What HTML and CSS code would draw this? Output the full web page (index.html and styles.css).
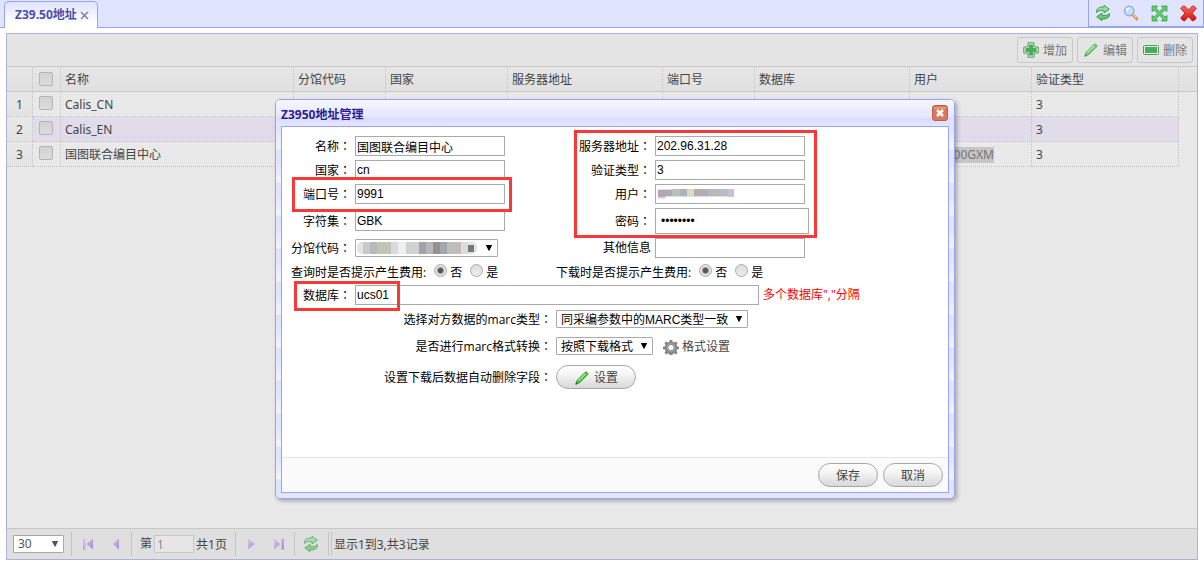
FILE: index.html
```html
<!DOCTYPE html>
<html lang="zh-CN">
<head>
<meta charset="utf-8">
<title>Z39.50地址</title>
<link rel="stylesheet" href="styles.css">
</head>
<body>
<svg class="defs" aria-hidden="true">
  <defs>
    <linearGradient id="green" x1="0" y1="0" x2="0" y2="1"><stop offset="0" stop-color="#a5eb9f"/><stop offset="1" stop-color="#4cc257"/></linearGradient>
    <linearGradient id="red" x1="0" y1="0" x2="0" y2="1"><stop offset="0" stop-color="#ff6a5a"/><stop offset="1" stop-color="#d80f0f"/></linearGradient>
    <linearGradient id="violet" x1="0" y1="0" x2="1" y2="1"><stop offset="0" stop-color="#d5caec"/><stop offset="1" stop-color="#a28ad4"/></linearGradient>
    <symbol id="refresh" viewBox="0 0 16 16"><path d="M1.500 7.500C1 3.500 4 1.800 9 2V.3l5.300 3.900L9 8V5.700C6 5.300 3.500 5.500 1.500 7.500zM14.500 8.500c.5 4-2.500 5.700-7.500 5.500v1.700l-5.300-3.900L7 8v2.300c3 .4 5.500.2 7.500-1.800z" fill="url(#green)" stroke="#3c8f49" stroke-width=".9" stroke-linejoin="round"/></symbol>
    <symbol id="pencil" viewBox="0 0 16 16"><path d="M1.800 14.200l1.200-3.700L11.300 2.200c.9-.8 3.200.9 2.500 2.300L5.300 13z" fill="#3cc43c" stroke="#2b8c33" stroke-width=".8"/><path d="M4.300 10.900l7.300-7.200" stroke="#a8f08a" stroke-width="1.300"/><path d="M1.500 14.500l.6-2 1.400 1.400z" fill="#1b5e22"/></symbol>
    <symbol id="caret" viewBox="0 0 8 8"><path d="M.8 1h6.400L4.300 6.800h-.6z" fill="currentColor"/></symbol>
  </defs>
</svg>

<header class="tabbar">
  <div class="tab"><span>Z39.50地址</span>
    <button class="tab-close" aria-label="关闭标签"><svg width="9" height="9" viewBox="0 0 9 9"><path d="M1 1l7 7M8 1L1 8" stroke="#6a6fc4" stroke-width="1.200"/></svg></button>
  </div>
  <div class="tools">
    <button aria-label="刷新"><svg width="16" height="16"><use href="#refresh"/></svg></button>
    <button aria-label="查找"><svg width="16" height="16" viewBox="0 0 16 16"><path d="M9.800 9.800l4 4" stroke="#d98c3a" stroke-width="3" stroke-linecap="round"/><path d="M10 9.500l3.500 3.500" stroke="#ffd18a" stroke-width="1.200"/><circle cx="6.200" cy="6" r="4.700" fill="#bfe0fb" stroke="#9aa6dc" stroke-width="1.400"/><path d="M3.500 5.500a3 3 0 0 1 3-2.300" stroke="#fff" stroke-width="1.400" fill="none"/></svg></button>
    <button aria-label="全屏"><svg width="17" height="17" viewBox="0 0 17 17"><path d="M1 1h5.500L5 3.200l3.500 3.500L12 3.200 10.500 1H16v5.500L13.800 5l-3.500 3.500 3.500 3.500 2.200-1.500V16h-5.500l1.500-2.200-3.500-3.500L5 13.800 6.500 16H1v-5.500L3.200 12l3.500-3.500L3.200 5 1 6.500z" fill="#5fcf6a" stroke="#2f9440" stroke-width=".7"/></svg></button>
    <button aria-label="关闭"><svg width="17" height="17" viewBox="0 0 17 17"><path d="M.8 3.500C1.500 2 3 .8 4.500 1L8.500 5l4-4c1.500-.2 3 1 3.700 2.500L12 8.200l4.200 4.600c-.7 1.700-2 2.900-3.700 3.200l-4-4.500-4 4.500c-1.700-.3-3-1.500-3.700-3.200L5 8.200z" fill="url(#red)" stroke="#b01212" stroke-width=".9" stroke-linejoin="round"/></svg></button>
  </div>
</header>

<main class="panel">
  <div class="toolbar">
    <button class="tool"><svg width="16" height="16" viewBox="0 0 16 16"><path d="M5 .8h6V5h4.200v6H11v4.200H5V11H.8V5H5z" fill="#dff0df" stroke="#4f9a5e" stroke-linejoin="round"/><path d="M6 2.500h4V6h3.500v4H10v3.500H6V10H2.500V6H6z" fill="#4aab58"/></svg><span>增加</span></button>
    <button class="tool faded"><svg width="16" height="16"><use href="#pencil"/></svg><span>编辑</span></button>
    <button class="tool"><svg width="16" height="16" viewBox="0 0 16 16"><rect x=".5" y="3.500" width="15" height="9" rx="1" fill="#e2f0e2" stroke="#4f9a5e"/><rect x="2" y="5" width="12" height="6" fill="#4aab58"/></svg><span>删除</span></button>
  </div>

  <div class="grid-area">
    <div class="head-strip"></div>
    <table class="grid">
      <colgroup><col class="w-no"><col class="w-check"><col class="w-name"><col class="w-short"><col class="w-mid"><col class="w-long"><col class="w-short"><col class="w-long"><col class="w-mid"><col class="w-type"></colgroup>
      <thead>
        <tr><th></th><th><input type="checkbox" aria-label="全选"></th><th>名称</th><th>分馆代码</th><th>国家</th><th>服务器地址</th><th>端口号</th><th>数据库</th><th>用户</th><th>验证类型</th></tr>
      </thead>
      <tbody>
        <tr><td>1</td><td><input type="checkbox" aria-label="选择 1"></td><td>Calis_CN</td><td></td><td></td><td></td><td></td><td></td><td></td><td>3</td></tr>
        <tr class="active"><td>2</td><td><input type="checkbox" aria-label="选择 2"></td><td>Calis_EN</td><td></td><td></td><td></td><td></td><td></td><td></td><td>3</td></tr>
        <tr><td>3</td><td><input type="checkbox" aria-label="选择 3"></td><td>国图联合编目中心</td><td></td><td></td><td></td><td></td><td></td><td class="user"><span class="marked">00GXM</span></td><td>3</td></tr>
      </tbody>
    </table>
  </div>

  <footer class="pager">
    <div class="select page-size"><select aria-label="每页条数"><option>30</option></select><svg width="8" height="8"><use href="#caret"/></svg></div>
    <i class="sep"></i>
    <button aria-label="首页"><svg width="12" height="12" viewBox="0 0 12 12"><path d="M1 .5h2.500v11H1zM11 .5v11L4.500 6z" fill="url(#violet)"/></svg></button>
    <button aria-label="上一页"><svg width="12" height="12" viewBox="0 0 12 12"><path d="M9 .5v11L2.500 6z" fill="url(#violet)"/></svg></button>
    <i class="sep"></i>
    <label class="page-no">第<input type="text" value="1"></label><span>共1页</span>
    <i class="sep"></i>
    <button aria-label="下一页"><svg width="12" height="12" viewBox="0 0 12 12"><path d="M3 .5v11L9.500 6z" fill="url(#violet)"/></svg></button>
    <button aria-label="末页"><svg width="12" height="12" viewBox="0 0 12 12"><path d="M8.500 .5H11v11H8.500zM1 .5v11L7.500 6z" fill="url(#violet)"/></svg></button>
    <i class="sep"></i>
    <button class="reload" aria-label="刷新列表"><svg width="16" height="16"><use href="#refresh"/></svg></button>
    <i class="sep"></i><i class="sep"></i>
    <span class="summary">显示1到3,共3记录</span>
  </footer>
</main>

<section class="dialog" role="dialog" aria-labelledby="dlg-title">
  <div class="dialog-title">
    <h1 id="dlg-title">Z3950地址管理</h1>
    <button class="dialog-close" aria-label="关闭"><svg width="16" height="16" viewBox="0 0 16 16"><rect x=".5" y=".5" width="15" height="15" rx="2.500" fill="#d9785a" stroke="#b5644c"/><path d="M2 3h12" stroke="#eda077" stroke-width="1.500"/><path d="M5 5l6 6M11 5l-6 6" stroke="#fff" stroke-width="2.600"/></svg></button>
  </div>
  <form class="dialog-body">
    <div class="form">
      <div class="row">
        <label for="name">名称<b lang="zh-TW">：</b></label><div class="field"><input id="name" type="text" value="国图联合编目中心"></div>
        <label for="server">服务器地址<b lang="zh-TW">：</b></label><div class="field"><input id="server" type="text" value="202.96.31.28"></div>
      </div>
      <div class="row">
        <label for="country">国家<b lang="zh-TW">：</b></label><div class="field"><input id="country" type="text" value="cn"></div>
        <label for="auth">验证类型<b lang="zh-TW">：</b></label><div class="field"><input id="auth" type="text" value="3"></div>
      </div>
      <div class="row">
        <label for="port">端口号<b lang="zh-TW">：</b></label><div class="field"><input id="port" type="text" value="9991"></div>
        <label for="user">用户<b lang="zh-TW">：</b></label><div class="field"><input id="user" type="text">
          <svg class="blot" width="80" height="14" viewBox="0 0 80 14"><path fill="#ddd" d="M2 3h75v8H12l-4 2H2z"/><path fill="#b7a3bd" d="M2 4h7v7H2z"/><path fill="#a9adb0" d="M9 4h7v6H9z"/><path fill="#b9c0b8" d="M16 3h8v7h-8z"/><path fill="#adb0bd" d="M24 3h7v7h-7z"/><path fill="#d8dcc5" d="M31 3h7v7h-7z"/><path fill="#bba9ab" d="M38 3h7v7h-7z"/><path fill="#acb0ba" d="M45 3h7v7h-7z"/><path fill="#b3bab9" d="M52 3h13v7H52z"/><path fill="#babbc8" d="M65 3h7v7h-7z"/><path fill="#cbc0cc" d="M72 3h6v8h-6z"/></svg></div>
      </div>
      <div class="row tall">
        <label for="charset">字符集<b lang="zh-TW">：</b></label><div class="field"><input id="charset" type="text" value="GBK"></div>
        <label for="pwd">密码<b lang="zh-TW">：</b></label><div class="field"><input id="pwd" class="password" type="password" value="12345678"></div>
      </div>
      <div class="row">
        <label for="branch">分馆代码<b lang="zh-TW">：</b></label><div class="field"><div class="select branch"><select id="branch"><option></option></select><svg width="8" height="8"><use href="#caret"/></svg></div>
          <svg class="blot" width="122" height="14" viewBox="0 0 122 14"><rect x="1" y="1" width="120" height="12" rx="5" fill="#e2e3e3"/><path fill="#cbc8c8" d="M7 1h7v12H7z"/><path fill="#b5b9bb" d="M14 1h7v12h-7z"/><path fill="#bfc4b3" d="M21 1h14v12H21z"/><path fill="#e0d5e0" d="M35 1h7v12h-7z"/><path fill="#eeefef" d="M42 1h8v12h-8z"/><path fill="#cfd2ce" d="M50 1h13v12H50z"/><path fill="#a3a2ac" d="M63 1h7v12h-7z"/><path fill="#b8b6bd" d="M70 1h7v12h-7z"/><path fill="#969191" d="M77 1h7v12h-7z"/><path fill="#a6a6b3" d="M84 1h7v12h-7z"/><path fill="#b9bfbb" d="M91 1h14v12H91z"/><path fill="#c8b9b9" d="M100 1h5v12h-5z"/><path fill="#dadddd" d="M105 1h7v12h-7z"/><path fill="#777879" d="M112 4h6v7h-6z"/></svg></div>
        <label for="other">其他信息</label><div class="field"><input id="other" type="text"></div>
      </div>
      <div class="row radios">
        <fieldset><legend>查询时是否提示产生费用:</legend>
          <label><input type="radio" name="q" checked>否</label><label><input type="radio" name="q">是</label></fieldset>
        <fieldset><legend>下载时是否提示产生费用:</legend>
          <label><input type="radio" name="d" checked>否</label><label><input type="radio" name="d">是</label></fieldset>
      </div>
      <div class="row database">
        <label for="db">数据库<b lang="zh-TW">：</b></label><input id="db" type="text" value="ucs01"><span class="hint">多个数据库","分隔</span>
      </div>
      <div class="row wide short">
        <label for="marc">选择对方数据的marc类型<b lang="zh-TW">：</b></label><div class="select"><select id="marc"><option>同采编参数中的MARC类型一致</option></select><svg width="8" height="8"><use href="#caret"/></svg></div>
      </div>
      <div class="row wide roomy">
        <label for="fmt">是否进行marc格式转换<b lang="zh-TW">：</b></label><div class="select"><select id="fmt"><option>按照下载格式</option></select><svg width="8" height="8"><use href="#caret"/></svg></div>
        <button type="button" class="link"><svg width="16" height="16" viewBox="0 0 16 16"><path d="M6.700 1h2.600l.4 2 1.500.6 1.700-1.100 1.700 1.700-1.100 1.800.6 1.300 1.900.5v2.300l-2 .5-.6 1.400 1.100 1.800-1.700 1.600-1.700-1.100-1.400.6-.4 2H6.700l-.4-2-1.500-.6-1.700 1.100-1.600-1.700 1-1.700-.6-1.400-1.900-.4V7.700l2-.4.5-1.400-1-1.700 1.600-1.700 1.700 1.100L6.300 3z" fill="#858585"/><circle cx="8" cy="8.500" r="4" fill="none" stroke="#aaa"/><circle cx="8" cy="8.500" r="2.600" fill="#fff"/></svg>格式设置</button>
      </div>
      <div class="row wide tall">
        <label for="setdel">设置下载后数据自动删除字段<b lang="zh-TW">：</b></label><button type="button" id="setdel" class="pill with-icon"><svg width="16" height="16"><use href="#pencil"/></svg>设置</button>
      </div>
    </div>
    <div class="actions"><button type="button" class="pill">保存</button><button type="button" class="pill">取消</button></div>
  </form>
  <div class="mark mark-port"></div>
  <div class="mark mark-server"></div>
  <div class="mark mark-db"></div>
</section>
</body>
</html>
```
FILE: styles.css
```css
* { box-sizing: border-box; }
body {
  margin: 0; min-height: 100vh; display: flex; flex-direction: column;
  position: relative; background: #fff; color: #444;
  font: 12px/16px "Open Sans", "Noto Sans CJK SC", sans-serif;
}
button, input, select { font: inherit; color: inherit; margin: 0; }
button { border: 0; padding: 0; background: none; display: flex; align-items: center; justify-content: center; white-space: nowrap; }
svg { display: block; flex: none; }
.defs { position: absolute; width: 0; height: 0; }

.tabbar { height: 28px; display: flex; justify-content: space-between; background: #e0e4ff; box-shadow: inset 0 -1px #98a5e8; padding-left: 4px; }
.tab { display: flex; align-items: center; gap: 3px; width: 94px; margin-top: 1px; padding-left: 10px; border: 1px solid #98a5e8; border-bottom: 0; border-radius: 5px 5px 0 0; background: linear-gradient(#dfe3ff, #fff 80%); color: #4a50a8; font-family: "Noto Sans", "Noto Sans CJK SC", sans-serif; font-weight: bold; white-space: nowrap; }
.tools { display: flex; align-items: center; justify-content: space-around; width: 116px; height: 27px; border: 1px solid #98a5e8; border-top: 0; background: #e0e4ff; }

.panel { flex: 1; display: flex; flex-direction: column; margin: 5px 6px 2px; border: 1px solid #aab2de; background: #e9e9e9; font-family: "Noto Sans", "Noto Sans CJK SC", sans-serif; }
.toolbar { height: 33px; display: flex; justify-content: flex-end; align-items: center; gap: 4px; padding-right: 4px; background: #e5e5e5; border-bottom: 1px solid #c8c8c8; }
.tool { height: 26px; width: 56px; gap: 4px; border: 1px solid #c8c8c8; border-radius: 3px; color: #777; }
.tool span { padding-top: 2px; }
.faded svg { opacity: .75; }
.grid-area { flex: 1; position: relative; }
.head-strip { position: absolute; left: 0; right: 0; top: 0; height: 25px; background: linear-gradient(#e6e6e6, #e0e0e0); border-bottom: 1px solid #c8c8c8; }
.grid { position: relative; table-layout: fixed; width: 1172px; border-collapse: separate; border-spacing: 0; }
.w-no { width: 26px; }
.w-check { width: 28px; }
.w-name { width: 233px; }
.w-short { width: 92px; }
.w-mid { width: 122px; }
.w-long { width: 155px; }
.w-type { width: 147px; }
.grid th, .grid td { height: 25px; padding: 1px 4px 0; border-right: 1px dotted #c4c4c4; text-align: left; font-weight: normal; white-space: nowrap; overflow: hidden; }
.grid td { border-bottom: 1px dotted #c4c4c4; }
.grid td:first-child { text-align: center; background: linear-gradient(#e8e8e8, #e3e3e3); }
.grid th:nth-child(2), .grid td:nth-child(2) { padding: 0 0 2px; text-align: center; }
.grid .active td:not(:first-child) { background: #e0dcea; }
.grid input { appearance: none; display: block; width: 14px; height: 14px; margin: 0 6px; border: 1px solid #b4b4b4; border-radius: 2px; background: linear-gradient(#d2d2d2, #dcdcdc); }
.grid .user { text-align: right; padding-right: 37px; }
.marked { display: inline-block; background: #c6c6c6; color: #777; }

.pager { height: 31px; display: flex; align-items: center; padding-left: 6px; border-top: 1px solid #c8c8c8; background: #dfdfdf; white-space: nowrap; }
.pager button { width: 28px; height: 20px; }
.pager > span { padding-top: 2px; }
.sep { width: 1px; height: 24px; margin: 0 1px; background: #c4c4c4; }
.page-size { width: 51px; margin-right: 6px; color: #555; }
.page-size + .sep { margin-right: 2px; }
.page-size select { width: 100%; background: #e4e4e4; }
.page-no { margin: 0 2px 0 7px; display: flex; align-items: center; }
.page-no input { width: 40px; height: 18px; margin-left: 2px; padding: 0 2px; border: 1px solid #c8c8c8; background: #e6e6e6; color: #888; }
.page-no + span { margin-right: 7px; }
.pager .reload { width: 31px; opacity: .7; }
.summary { margin-left: 1px; }

.select { position: relative; display: flex; }
.select select { appearance: none; height: 18px; padding: 0 18px 0 4px; border: 1px solid #aaa; border-radius: 1px; background: #fff; line-height: 16px; }
.select svg { position: absolute; right: 5px; top: 5px; pointer-events: none; }
.dialog .select select { padding-top: 1px; font-family: "Liberation Sans", "Noto Sans CJK SC", sans-serif; }

.dialog { position: absolute; left: 275px; top: 99px; width: 680px; padding: 0 5px 5px; border: 1px solid #98a5ee; border-radius: 5px; background: repeating-linear-gradient(#e4e7ff 0, #f2f4ff 16px, #dfe2fd 17px, #e2e5ff 33px); box-shadow: 2px 2px 4px rgba(0, 0, 0, .3); color: #000; }
.dialog-title { height: 26px; display: flex; align-items: center; justify-content: space-between; margin: 0 -5px; padding: 0 6px 0 5px; border-radius: 4px 4px 0 0; background: linear-gradient(#f6f7ff, #e2e5ff 68%, #d9dcff 70%, #e4e7ff); }
.dialog-title h1 { margin: 0; padding-top: 4px; font: bold 12px/16px "Noto Sans", "Noto Sans CJK SC", sans-serif; color: #2e1a96; }
.dialog-body { border: 1px solid #98a5ee; background: #fff; }
.form { min-height: 330px; padding: 7px 0 0 1px; }
.row { display: grid; grid-template-columns: 68px 228px 72px 1fr; align-items: center; height: 24px; white-space: nowrap; }
.row > label { justify-self: end; }
.row b { font-family: "Noto Sans CJK TC", sans-serif; font-weight: normal; }
.field { position: relative; padding-left: 4px; }
.form input[type="text"], .password { display: block; width: 150px; height: 20px; padding: 0 1px; border: 1px solid #a9a9a9; background: #fff; font: 12px/16px "Liberation Sans", "Noto Sans CJK SC", sans-serif; }
.form .password { width: 154px; height: 26px; padding: 0 5px; }
.tall { height: 30px; }
.blot { position: absolute; left: 5px; top: 2px; pointer-events: none; }
.branch { width: 143px; }
.branch select { width: 100%; }
.row.radios { grid-template-columns: 265px 1fr; height: 22px; padding-left: 8px; }
fieldset { display: flex; align-items: center; margin: 0; padding: 0; border: 0; }
legend { float: left; padding: 3px 8px 0 0; }
.radios label { display: flex; align-items: center; padding-top: 3px; margin-right: 8px; }
.radios input { appearance: none; width: 13px; height: 13px; margin: -4px 3px 0 0; border: 1px solid #aaa; border-radius: 50%; background: linear-gradient(#dcdcdc, #eee); }
.radios input:checked { background: radial-gradient(circle, #555 0 2px, #e2e2e2 4px); }
.row.database { grid-template-columns: 72px 404px 1fr; height: 26px; }
.database > label { margin-right: 4px; }
.database input[type="text"] { width: 100%; }
.hint { padding-left: 4px; color: #f00; }
.row.wide { grid-template-columns: 269px auto 1fr; column-gap: 4px; }
.row.short { height: 22px; }
.row.roomy { height: 32px; }
.row.wide.tall { height: 30px; }
.wide button { justify-self: start; }
.link { gap: 3px; margin-left: 6px; padding-top: 1px; color: #444; }
.pill { width: 60px; height: 24px; padding-top: 1px; border: 1px solid #a8a8a8; border-radius: 12px; background: linear-gradient(#fff, #f4f4f4 40%, #d8d8d8); color: #444; }
.with-icon { width: 80px; gap: 4px; }
.actions { height: 35px; display: flex; align-items: center; justify-content: flex-end; gap: 5px; padding-right: 5px; border-top: 1px solid #e6e6e6; background: #fafafa; }

.mark { position: absolute; border: 3px solid #fb3838; pointer-events: none; }
.mark-port { left: 16px; top: 77px; width: 220px; height: 35px; }
.mark-server { left: 298px; top: 30px; width: 243px; height: 108px; }
.mark-db { left: 18px; top: 181px; width: 106px; height: 30px; }
```
